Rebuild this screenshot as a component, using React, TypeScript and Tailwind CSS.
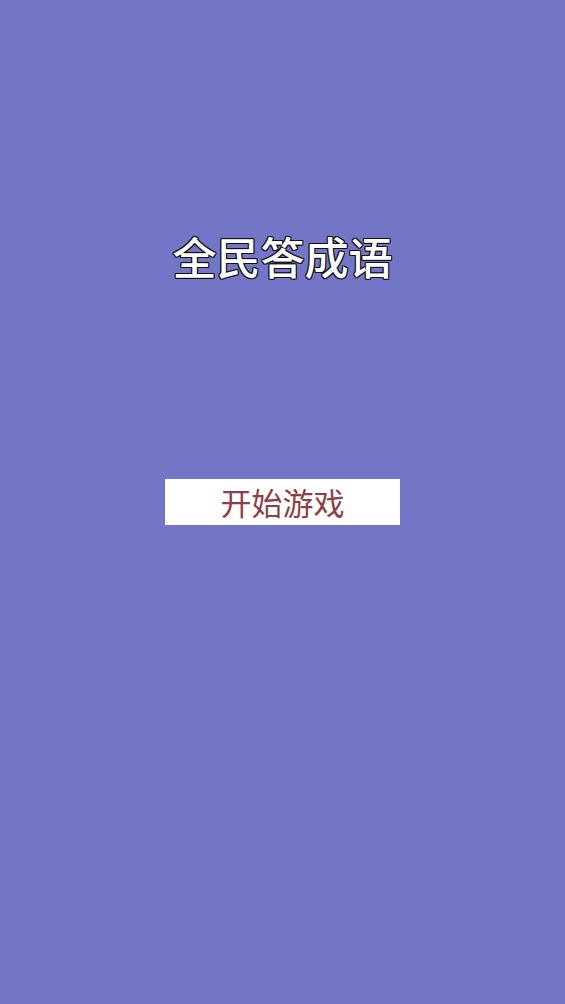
export default function App() {
  return (
    <div className="w-[565px] h-[1004px] bg-[#7376c7] flex flex-col items-center font-['Noto_Sans_CJK_SC','Noto_Sans',sans-serif]">
      <h1 className="mt-[228px] text-[44px] leading-[56px] text-white font-medium [text-shadow:1px_1px_0_#111,-1px_-1px_0_#111,1px_-1px_0_#111,-1px_1px_0_#111,0_1px_0_#111,0_-1px_0_#111,1px_0_0_#111,-1px_0_0_#111]">
        全民答成语
      </h1>
      <button className="mt-[195px] w-[235px] h-[46px] bg-white text-[#8e3f45] text-[31px] leading-[46px] flex items-center justify-center">
        开始游戏
      </button>
    </div>
  );
}
